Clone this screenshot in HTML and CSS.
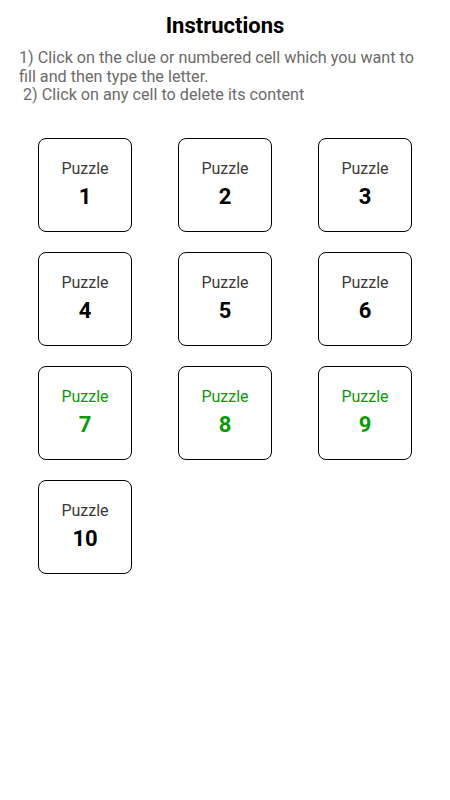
FILE: index.html
```html
<!DOCTYPE html>
<html>
<head>
<meta charset="utf-8">
<link rel="stylesheet" href="styles.css">
</head>
<body>
<div class="page">
  <h1 class="title">Instructions</h1>
  <p class="instructions">1) Click on the clue or numbered cell which you want to fill and then type the letter.<br>&nbsp;2) Click on any cell to delete its content</p>
  <div class="grid">
    <div class="card"><span class="label">Puzzle</span><span class="num">1</span></div>
    <div class="card"><span class="label">Puzzle</span><span class="num">2</span></div>
    <div class="card"><span class="label">Puzzle</span><span class="num">3</span></div>
    <div class="card"><span class="label">Puzzle</span><span class="num">4</span></div>
    <div class="card"><span class="label">Puzzle</span><span class="num">5</span></div>
    <div class="card"><span class="label">Puzzle</span><span class="num">6</span></div>
    <div class="card done"><span class="label">Puzzle</span><span class="num">7</span></div>
    <div class="card done"><span class="label">Puzzle</span><span class="num">8</span></div>
    <div class="card done"><span class="label">Puzzle</span><span class="num">9</span></div>
    <div class="card"><span class="label">Puzzle</span><span class="num">10</span></div>
  </div>
</div>
</body>
</html>
```
FILE: styles.css
```css
html, body {
  margin: 0;
  padding: 0;
  background: #ffffff;
}
body {
  font-family: Roboto, "Noto Sans", sans-serif;
  color: #000;
}
.page {
  display: flex;
  flex-direction: column;
}
.title {
  margin: 13px 0 0;
  font-size: 22px;
  font-weight: 700;
  line-height: 26px;
  text-align: center;
}
.instructions {
  margin: 10px 0 0;
  padding: 0 28px 0 19px;
  font-size: 16.2px;
  line-height: 18.5px;
  color: #6b6b6b;
}
.grid {
  display: grid;
  grid-template-columns: repeat(3, 94px);
  column-gap: 46px;
  row-gap: 20px;
  padding: 33px 0 0 38px;
}
.card {
  box-sizing: border-box;
  width: 94px;
  height: 94px;
  border: 1px solid #000;
  border-radius: 8px;
  display: flex;
  flex-direction: column;
  align-items: center;
  justify-content: center;
  gap: 6px;
}
.label {
  font-size: 16px;
  line-height: 19px;
  color: #3a3a3a;
}
.num {
  font-size: 22px;
  font-weight: 700;
  line-height: 26px;
  color: #000;
}
.done .label,
.done .num {
  color: #0a9a0a;
}
```
